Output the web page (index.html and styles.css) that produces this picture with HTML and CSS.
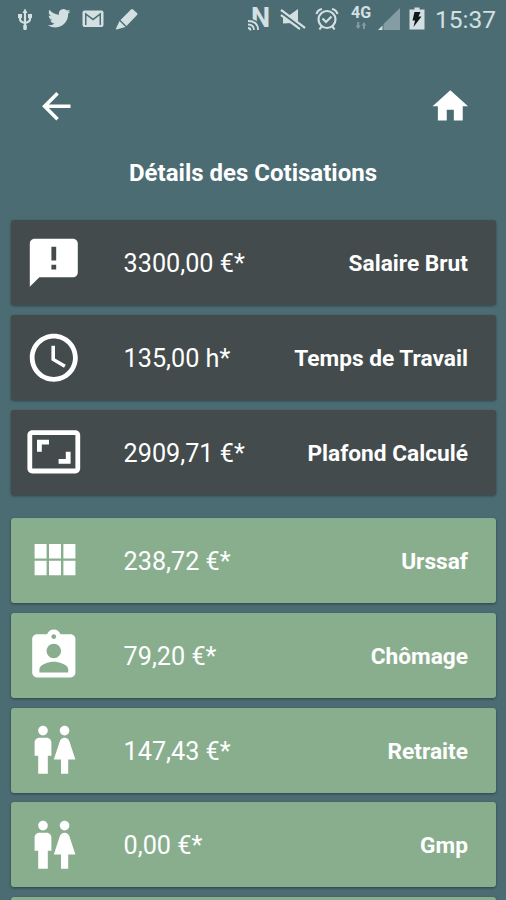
FILE: index.html
```html
<!DOCTYPE html>
<html lang="fr">
    <head>
        <meta charset="utf-8">
        <title>Détails des Cotisations</title>
        <link rel="stylesheet" href="styles.css">
    </head>
    <body>
        <div class="status-bar">
            <div class="status-group">
                <!-- usb -->
                <svg viewBox="0 0 24 24"><path class="line" d="M12 4v19M7 8v4q0 3 5 4q5-1 5-4V8" /><path d="M9.500 6L12 1.500 14.500 6zM5 7h4v4H5zM15 7h4v4h-4zM10.300 18h3.500v4.500h-3.500z"/></svg>
                <!-- twitter -->
                <svg viewBox="0 0 24 24"><path d="M23.500 4.200c-.8.4-1.700.6-2.600.7.900-.6 1.600-1.500 2-2.500-.9.500-1.800.9-2.900 1.100a4.700 4.700 0 0 0-8 4.200C8.200 7.500 4.700 5.700 2.400 2.800c-1.200 2.100-.6 4.800 1.400 6.200-.7 0-1.400-.2-2.100-.6 0 2.200 1.500 4.200 3.700 4.700-.7.200-1.400.2-2.100.1.600 1.800 2.300 3.200 4.300 3.200A9.300 9.300 0 0 1 .8 18.300c11 6 20.600-1.500 20.400-11.700.9-.7 1.700-1.500 2.300-2.400z"/></svg>
                <!-- mail -->
                <svg viewBox="0 0 24 24"><path fill-rule="evenodd" d="M3.500 3.500h17q2 0 2 2v12.500q0 2-2 2h-17q-2 0-2-2V5.500q0-2 2-2zM4 5.500v12.500h1.500V8.500l6.500 5 6.500-5v9.500H20V5.500l-8 6z"/></svg>
                <!-- pen -->
                <svg viewBox="0 0 24 24"><path d="M16 2.500q1-1 2 0l4 3.500q1 1 0 2L11.500 19 5.500 13zM4.500 14l6 6-9 2.500q-1 0-.5-1z"/></svg>
            </div>
            <div class="status-group">
                <!-- nfc -->
                <svg viewBox="0 0 24 24"><text class="nfc" x="4" y="20">N</text><path class="cut" d="M1 11.500q12 0 12 12H1z"/><path class="line thin" d="M1 14q10 0 10 9M1 17.500q6 0 6 5.500M1 21q2.500 0 2.500 2.500"/></svg>
                <!-- sound off -->
                <svg viewBox="0 0 24 24"><path d="M2 8.500h6l9-6.500v18.500L11 16l-9 .5z"/><path class="cut-line" d="M0 5.200l23 17"/><path class="line" d="M0 3l24 18M0 8l19 14" stroke-width="2.200"/><path class="cut-line" d="M0 5.500l22 16.300" /></svg>
                <!-- alarm -->
                <svg viewBox="0 0 24 24"><circle class="line" cx="12" cy="12.500" r="8.500"/><path class="line" d="M7.500 11.500l3.500 3.500L16.500 9.500M1.500 7q1-4 5.500-5M22.500 7q-1-4-5.500-5M6.500 19.500L4.500 22.500M17.500 19.500l2 3"/></svg>
                <!-- 4G -->
                <svg viewBox="0 0 24 24"><text class="network" x="2" y="11">4G</text><path class="dim" d="M6.500 18.500L9.200 22l2.500-3.500h-1.500V15H8.200v3.500zM12.500 18.500h1.500V22h1.900v-3.500h1.500L15 15z"/></svg>
                <!-- signal -->
                <svg class="narrow" viewBox="0 0 24 24"><path class="dim" d="M23 1v22H6.500V17z"/><path d="M1 23l4.500-4.500V23z"/></svg>
                <!-- battery -->
                <svg class="narrow" viewBox="0 0 24 24"><path d="M9.500 .5h5v2h5V22.500h-15V2.500h5z"/><path class="bolt" d="M9.500 5h6l-2 4.500h3L8.500 20l1.500-6.500H7.500z"/></svg>
                <span class="time">15:37</span>
            </div>
        </div>

        <div class="nav">
            <svg viewBox="0 0 24 24"><path d="M20 11H7.830l5.590-5.590L12 4l-8 8 8 8 1.410-1.410L7.830 13H20v-2z"/></svg>
            <svg viewBox="0 0 24 24"><path d="M10 20v-6h4v6h5v-8h3L12 3 2 12h3v8z"/></svg>
        </div>

        <h1>Détails des Cotisations</h1>

        <div class="cards">
            <div class="card dark">
                <svg viewBox="0 0 24 24"><path d="M20 2H4c-1.100 0-2 .9-2 2v18l4-4h14c1.100 0 2-.9 2-2V4c0-1.100-.9-2-2-2zm-7 12.800h-2v-2h2v2zm0-3.800h-2V5.300h2V11z"/></svg>
                <span class="value">3300,00 €*</span>
                <span class="label">Salaire Brut</span>
            </div>
            <div class="card dark">
                <svg viewBox="0 0 24 24"><path d="M11.990 2C6.470 2 2 6.480 2 12s4.470 10 9.990 10C17.520 22 22 17.520 22 12S17.520 2 11.990 2zM12 20c-4.420 0-8-3.580-8-8s3.580-8 8-8 8 3.580 8 8-3.580 8-8 8zm.5-13H11v6l5.250 3.150.75-1.230-4.500-2.670z"/></svg>
                <span class="value">135,00 h*</span>
                <span class="label">Temps de Travail</span>
            </div>
            <div class="card dark">
                <svg viewBox="0 0 24 24"><path d="M19 12h-2v3h-3v2h5v-5zM7 9h3V7H5v5h2V9zm14-6H3c-1.100 0-2 .9-2 2v14c0 1.100.9 2 2 2h18c1.100 0 2-.9 2-2V5c0-1.100-.9-2-2-2zm0 16.010H3V4.990h18v14.020z"/></svg>
                <span class="value">2909,71 €*</span>
                <span class="label">Plafond Calculé</span>
            </div>
        </div>

        <div class="cards">
            <div class="card green">
                <svg viewBox="0 0 24 24"><path d="M4 11h5V5H4v6zm0 7h5v-6H4v6zm6 0h5v-6h-5v6zm6 0h5v-6h-5v6zm-6-7h5V5h-5v6zm6-6v6h5V5h-5z"/></svg>
                <span class="value">238,72 €*</span>
                <span class="label">Urssaf</span>
            </div>
            <div class="card green">
                <svg viewBox="0 0 24 24"><path d="M19 3h-4.180C14.400 1.840 13.300 1 12 1c-1.300 0-2.400.84-2.820 2H5c-1.100 0-2 .9-2 2v14c0 1.100.9 2 2 2h14c1.100 0 2-.9 2-2V5c0-1.100-.9-2-2-2zm-7 0c.55 0 1 .45 1 1s-.45 1-1 1-1-.45-1-1 .45-1 1-1zm0 4c1.660 0 3 1.340 3 3s-1.340 3-3 3-3-1.340-3-3 1.340-3 3-3zm6 12H6v-1.400c0-2 4-3.100 6-3.100s6 1.100 6 3.100V19z"/></svg>
                <span class="value">79,20 €*</span>
                <span class="label">Chômage</span>
            </div>
            <div class="card green">
                <svg viewBox="0 0 24 24"><path d="M5.500 22v-7.500H4V9c0-1.100.9-2 2-2h3c1.100 0 2 .9 2 2v5.500H9.500V22h-4zM18 22v-6h3l-2.540-7.630C18.180 7.550 17.420 7 16.560 7h-.12c-.86 0-1.630.55-1.900 1.370L12 16h3v6h3zM7.500 6c1.110 0 2-.89 2-2s-.89-2-2-2-2 .89-2 2 .89 2 2 2zm9 0c1.110 0 2-.89 2-2s-.89-2-2-2-2 .89-2 2 .89 2 2 2z"/></svg>
                <span class="value">147,43 €*</span>
                <span class="label">Retraite</span>
            </div>
            <div class="card green">
                <svg viewBox="0 0 24 24"><path d="M5.500 22v-7.500H4V9c0-1.100.9-2 2-2h3c1.100 0 2 .9 2 2v5.500H9.500V22h-4zM18 22v-6h3l-2.540-7.630C18.180 7.550 17.420 7 16.560 7h-.12c-.86 0-1.630.55-1.900 1.370L12 16h3v6h3zM7.500 6c1.110 0 2-.89 2-2s-.89-2-2-2-2 .89-2 2 .89 2 2 2zm9 0c1.110 0 2-.89 2-2s-.89-2-2-2-2 .89-2 2 .89 2 2 2z"/></svg>
                <span class="value">0,00 €*</span>
                <span class="label">Gmp</span>
            </div>
            <div class="card green peek"></div>
        </div>
    </body>
</html>
```
FILE: styles.css
```css
body{
    margin: 0;
    height: 900px;
    overflow: hidden;
    background: #4c6c74;
    color: white;
    font-family: Roboto, sans-serif;
}

svg{
    display: block;
    flex: none;
    fill: currentColor;
    overflow: visible;
}

.status-bar{
    display: flex;
    justify-content: space-between;
    box-sizing: border-box;
    height: 40px;
    padding: 5px 10px 0 13px;
    color: #d3e0e2;
}
.status-group{
    display: flex;
    gap: 10px;
}
.status-group svg{
    width: 24px;
    height: 24px;
    margin-top: 2px;
}
.status-group .narrow{
    margin-left: -6px;
}
.line{
    fill: none;
    stroke: currentColor;
    stroke-width: 2.2;
}
.thin{
    stroke-width: 1.8;
}
.cut{
    fill: #4c6c74;
}
.cut-line{
    stroke: #4c6c74;
    stroke-width: 1.6;
}
.dim{
    fill: #839da3;
}
.bolt{
    fill: #10181a;
}
.nfc{
    font-size: 27px;
    font-weight: bold;
}
.network{
    font-size: 16px;
    font-weight: bold;
}
.time{
    margin-left: -4px;
    font-size: 24.500px;
    line-height: 30px;
}

.nav{
    display: flex;
    justify-content: space-between;
    padding: 45px 34px 0 35px;
}
.nav svg{
    width: 42.6px;
    height: 42.6px;
}

h1{
    margin: 30px 0 32.700px;
    font-size: 24px;
    font-weight: bold;
    line-height: 30px;
    text-align: center;
}

.cards{
    display: flex;
    flex-direction: column;
    gap: 9.7px;
    padding: 0 10px 0 11px;
    margin-bottom: 23.500px;
}
.card{
    display: flex;
    align-items: center;
    flex: none;
    box-sizing: border-box;
    height: 85px;
    padding: 0 28px 0 14px;
    border-radius: 3px;
    box-shadow: 0 1px 3px rgba(0,0,0,0.4);
}
.card svg{
    width: 57.6px;
    height: 57.6px;
}
.dark{
    background: #434b4c;
}
.green{
    background: #89ae8e;
}
/* next card, only its top edge is visible */
.peek{
    height: 3px;
    border-radius: 3px 3px 0 0;
}
.cards:last-child{
    margin-bottom: 0;
}
.value{
    margin-left: 41px;
    padding-top: 2px;
    font-size: 25.200px;
}
.label{
    margin-left: auto;
    padding-top: 2px;
    font-size: 22.700px;
    font-weight: bold;
}
```
